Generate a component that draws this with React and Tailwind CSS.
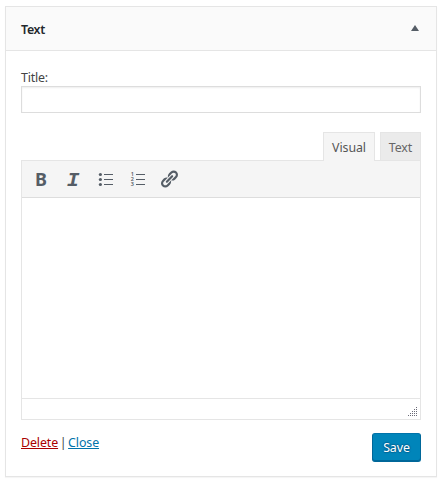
const rows = [4.5, 9.5, 14.5];

function BulletIcon() {
  return (
    <svg className="size-5" viewBox="0 0 20 20" fill="#555d66">
      {rows.map((y) => (
        <g key={y}>
          <circle cx="5.4" cy={y + 1} r="1.6" />
          <rect x="9" y={y + 0.5} width="9" height="1" />
        </g>
      ))}
    </svg>
  );
}

function NumberIcon() {
  return (
    <svg className="size-5" viewBox="0 0 20 20" fill="#555d66">
      {rows.map((y, i) => (
        <g key={y}>
          <text x="3.8" y={y + 2.8} fontSize="5.5" fontWeight="600" fontFamily="Noto Sans, sans-serif">
            {i + 1}
          </text>
          <rect x="9" y={y + 0.5} width="9" height="1" />
        </g>
      ))}
    </svg>
  );
}

function LinkIcon() {
  return (
    <svg className="size-5" viewBox="0 0 20 20" fill="#555d66">
      <path d="M17.74 2.76c1.68 1.69 1.68 4.41 0 6.1l-1.53 1.52c-1.12 1.12-2.7 1.47-4.14 1.09l2.62-2.61.76-.77.76-.76c.84-.84.84-2.2 0-3.04-.84-.85-2.2-.85-3.04 0l-.77.76-3.38 3.38c-.37-1.44-.02-3.02 1.1-4.14l1.52-1.53c1.69-1.68 4.42-1.68 6.1 0zM8.59 13.43l5.34-5.34c.42-.42.42-1.1 0-1.52-.44-.43-1.13-.39-1.53 0l-5.33 5.34c-.42.42-.42 1.1 0 1.52.44.43 1.13.39 1.52 0zm-.76 2.29l4.14-4.15c.38 1.44.03 3.02-1.09 4.14l-1.52 1.53c-1.69 1.68-4.41 1.68-6.1 0-1.68-1.68-1.68-4.42 0-6.1l1.53-1.52c1.12-1.12 2.7-1.47 4.14-1.1l-4.14 4.15c-.85.84-.85 2.2 0 3.05.84.84 2.2.84 3.04 0z" />
    </svg>
  );
}

function ResizeGrip() {
  const dots = [];
  for (let r = 0; r < 5; r++) {
    for (let c = 4 - r; c < 5; c++) dots.push([c * 2, r * 2]);
  }
  return (
    <svg className="h-[9px] w-[9px]" viewBox="0 0 9 9" fill="#6b6b78" shapeRendering="crispEdges">
      {dots.map(([x, y]) => (
        <rect key={`${x}-${y}`} x={x} y={y} width="1" height="1" />
      ))}
    </svg>
  );
}

export default function App() {
  return (
    <div className="h-[484px] w-[445px] bg-white pt-[6px] pl-[5px] font-['Noto_Sans',sans-serif] text-[12.4px] tracking-[-0.1px] text-[#444]">
      <section className="flex h-[471px] w-[432px] flex-col border border-[#e5e5e5] bg-white shadow-[0_1px_1px_rgba(0,0,0,0.04)]">
        <header className="flex h-11 shrink-0 items-center justify-between border-b border-[#e5e5e5] bg-[#fafafa] pr-[17px] pl-[15px]">
          <h3 className="pt-[3px] text-[12.4px] font-semibold tracking-[-0.3px] text-[#23282d]">Text</h3>
          <svg className="mb-0.5 h-[6px] w-2" viewBox="0 0 8 6" fill="#555d66">
            <path d="M4 0L8 6H0z" />
          </svg>
        </header>
        <div className="flex flex-col px-[15px] pt-[17px]">
          <label htmlFor="title" className="h-[18px] leading-[20px] tracking-[-0.2px]">Title:</label>
          <input
            id="title"
            className="h-[27px] w-full border border-[#ddd] bg-white shadow-[inset_0_1px_2px_rgba(0,0,0,0.07)] outline-none"
          />
          <div className="z-10 mt-[19px] flex justify-end gap-[5px]">
            <button className="h-[29px] w-[52px] border border-b-0 border-[#e5e5e5] bg-[#f5f5f5] pt-[3px] text-[#555]">Visual</button>
            <button className="h-[28px] w-[41px] border border-b-0 border-[#e5e5e5] bg-[#ebebeb] pt-1 text-[#666]">Text</button>
          </div>
          <div className="-mt-px flex h-[260px] flex-col border border-[#e5e5e5]">
            <div className="flex h-[37px] shrink-0 items-center gap-3 border-b border-[#ddd] bg-[#f5f5f5] pl-[9px] text-[#555d66]">
              <button className="size-5 text-[18px] leading-5 font-bold tracking-normal">B</button>
              <button className="size-5 pt-0.5 font-['Liberation_Mono',monospace] text-[21px] leading-5 font-bold tracking-normal italic">I</button>
              <button><BulletIcon /></button>
              <button><NumberIcon /></button>
              <button><LinkIcon /></button>
            </div>
            <div className="flex-1 bg-white" />
            <div className="flex h-[21px] shrink-0 items-end justify-end border-t border-[#e5e5e5] pr-[3px] pb-[3px]">
              <ResizeGrip />
            </div>
          </div>
          <div className="mt-[13px] flex items-start justify-between">
            <div className="flex leading-[19px]">
              <a className="text-[#a00] underline">Delete</a>
              <span className="w-[10px] text-center">|</span>
              <a className="text-[#0073aa] underline">Close</a>
            </div>
            <button className="h-[29px] w-[49px] rounded-[3px] border border-[#006799] border-t-[#0073aa] bg-[#0085ba] pt-px text-white shadow-[inset_0_-1px_0_#006799] [text-shadow:0_-1px_1px_#006799,1px_0_1px_#006799,0_1px_1px_#006799,-1px_0_1px_#006799]">
              Save
            </button>
          </div>
        </div>
      </section>
    </div>
  );
}
